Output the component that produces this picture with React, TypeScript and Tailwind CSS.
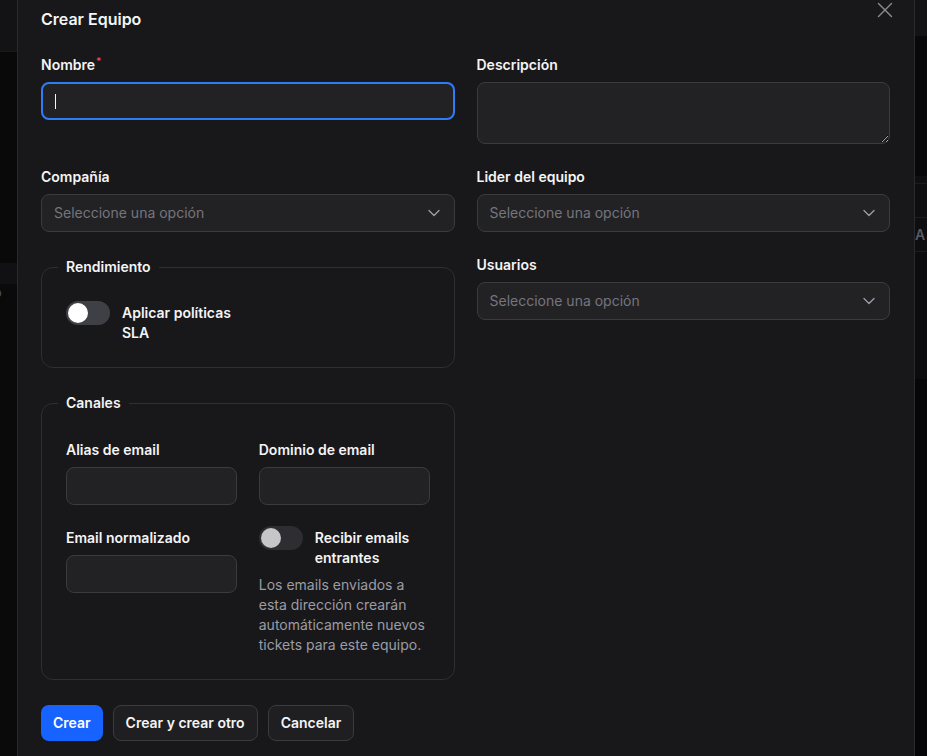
import { ChevronDown, X } from "lucide-react";

function Label({ children, required }: { children: React.ReactNode; required?: boolean }) {
  return (
    <label className="block text-sm font-semibold leading-5 text-[#f4f4f5]">
      {children}
      {required && <sup className="ml-px text-[10px] font-semibold text-[#ef4444]">*</sup>}
    </label>
  );
}

function Select() {
  return (
    <div className="mt-[7px] flex h-[38px] items-center justify-between rounded-lg border border-[#3a3a40] bg-[#222225] pl-3 pr-[10px] text-sm text-[#75757d]">
      <span>Seleccione una opción</span>
      <ChevronDown size={20} strokeWidth={1.6} className="text-[#9d9da5]" />
    </div>
  );
}

function TextInput() {
  return <div className="mt-[7px] h-[38px] rounded-lg border border-[#3a3a40] bg-[#222225]" />;
}

function Toggle({ label, disabled }: { label: React.ReactNode; disabled?: boolean }) {
  return (
    <div className="flex items-start gap-3">
      <span
        className={
          disabled
            ? "-mt-0.5 flex h-6 w-11 shrink-0 items-center rounded-full bg-[#2d2d32] p-0.5"
            : "-mt-0.5 flex h-6 w-11 shrink-0 items-center rounded-full bg-[#3f3f46] p-0.5"
        }
      >
        <span className={disabled ? "h-5 w-5 rounded-full bg-[#c6c6c9]" : "h-5 w-5 rounded-full bg-white"} />
      </span>
      <span className="text-sm font-semibold leading-5 text-[#f4f4f5]">{label}</span>
    </div>
  );
}

export default function App() {
  return (
    <div className="flex h-[756px] w-full overflow-hidden bg-[#08080a] font-[Inter,sans-serif]">
      {/* backdrop, left */}
      <div className="flex w-[17px] shrink-0 flex-col">
        <div className="h-[52px] border-b border-[#1a1a1c] bg-[#131315]" />
        <div className="h-[211px] bg-[#09090a]" />
        <div className="h-[21px] bg-[#111113]" />
        <div className="flex-1 bg-[#0a0a0b] pt-[1px] text-[11px] leading-4 text-[#55555c]">
          <span className="-ml-[5px]">o</span>
        </div>
      </div>

      {/* modal */}
      <div className="relative w-[898px] shrink-0 border-x border-[#2a2a2e] bg-[#18181b] pl-[23px] pr-6 pt-[7px]">
        <h2 className="text-base font-semibold leading-6 text-[#f4f4f5]">Crear Equipo</h2>
        <button type="button" className="absolute right-[16px] top-[-3px] text-[#8b8b93]">
          <X size={26} strokeWidth={1.3} />
        </button>

        <div className="mt-6 grid grid-cols-2 gap-x-[22px] gap-y-[23px]">
          <div>
            <Label required>Nombre</Label>
            <div className="mt-[7px] flex h-[38px] items-center rounded-lg border-2 border-[#2f7df6] bg-[#222225] pl-3">
              <span className="h-[15px] w-px bg-[#f4f4f5]" />
            </div>
          </div>
          <div>
            <Label>Descripción</Label>
            <textarea className="mt-[7px] block h-[62px] w-full rounded-lg border border-[#3a3a40] bg-[#222225] outline-none" />
          </div>

          <div>
            <Label>Compañía</Label>
            <Select />
          </div>
          <div>
            <Label>Lider del equipo</Label>
            <Select />
          </div>

          <div className="flex flex-col gap-[23px]">
            <fieldset className="rounded-xl border border-[#2e2e33] px-6 pb-6 pt-6">
              <legend className="-ml-2 px-2 text-sm font-semibold leading-6 text-[#f4f4f5]">Rendimiento</legend>
              <div className="grid grid-cols-2 gap-x-[22px]">
                <Toggle label="Aplicar políticas SLA" />
              </div>
            </fieldset>

            <fieldset className="rounded-xl border border-[#2e2e33] px-6 pb-6 pt-[25px]">
              <legend className="-ml-2 px-2 text-sm font-semibold leading-6 text-[#f4f4f5]">Canales</legend>
              <div className="grid grid-cols-2 gap-x-[22px] gap-y-[23px]">
                <div>
                  <Label>Alias de email</Label>
                  <TextInput />
                </div>
                <div>
                  <Label>Dominio de email</Label>
                  <TextInput />
                </div>
                <div>
                  <Label>Email normalizado</Label>
                  <TextInput />
                </div>
                <div>
                  <Toggle label="Recibir emails entrantes" disabled />
                  <p className="mt-[7px] text-sm leading-5 text-[#9c9ca4]">
                    Los emails enviados a esta dirección crearán automáticamente nuevos tickets para este equipo.
                  </p>
                </div>
              </div>
            </fieldset>
          </div>
          <div>
            <Label>Usuarios</Label>
            <Select />
          </div>
        </div>

        <div className="mt-[25px] flex gap-2.5">
          <button type="button" className="h-9 rounded-lg bg-[#1763ff] px-3 text-sm font-semibold text-white">
            Crear
          </button>
          <button
            type="button"
            className="h-9 rounded-lg border border-[#3a3a40] bg-[#1f1f22] px-3 text-sm font-semibold text-[#f4f4f5]"
          >
            Crear y crear otro
          </button>
          <button
            type="button"
            className="h-9 rounded-lg border border-[#3a3a40] bg-[#1f1f22] px-3 text-sm font-semibold text-[#f4f4f5]"
          >
            Cancelar
          </button>
        </div>
      </div>

      {/* backdrop, right */}
      <div className="flex flex-1 flex-col">
        <div className="h-[36px] bg-[#131315]" />
        <div className="h-[140px] bg-[#08080a]" />
        <div className="h-[8px] border-b border-[#1c1c1f] bg-[#0f0f11]" />
        <div className="h-[34px] border-b border-[#1c1c1f] bg-[#0e0e10]" />
        <div className="h-[34px] border-b border-[#1c1c1f] bg-[#0e0e10] text-sm font-semibold leading-[34px] text-[#5a5a62]">
          A
        </div>
        <div className="h-[127px] bg-[#0c0c0e]" />
        <div className="flex-1 bg-[#060608]" />
      </div>
    </div>
  );
}
